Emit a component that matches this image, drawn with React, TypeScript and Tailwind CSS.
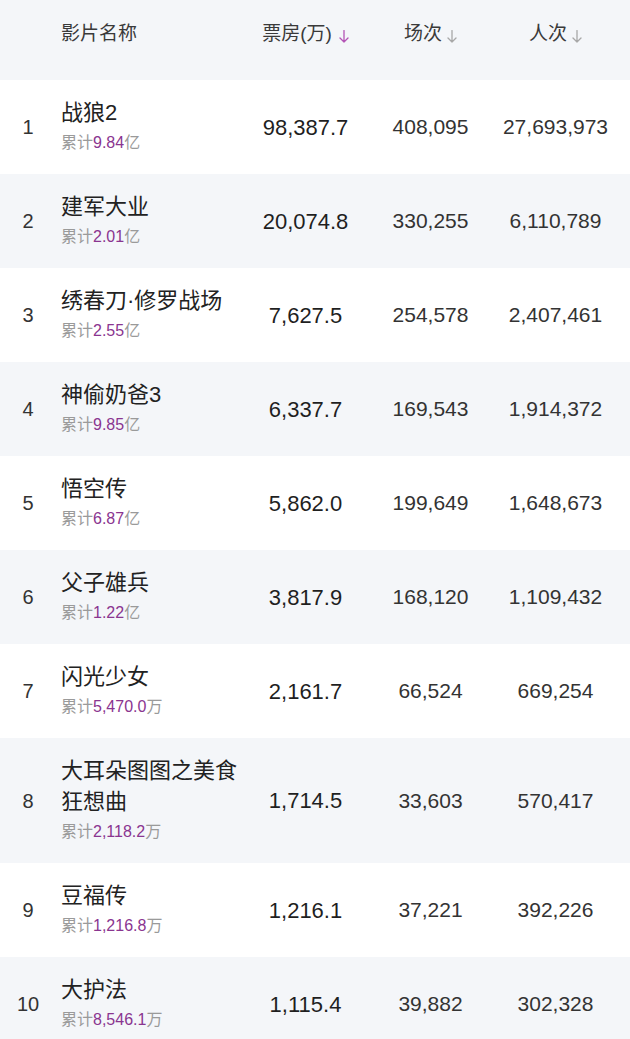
const movies = [
  { rank: 1, name: "战狼2", total: "9.84", unit: "亿", box: "98,387.7", shows: "408,095", people: "27,693,973" },
  { rank: 2, name: "建军大业", total: "2.01", unit: "亿", box: "20,074.8", shows: "330,255", people: "6,110,789" },
  { rank: 3, name: "绣春刀·修罗战场", total: "2.55", unit: "亿", box: "7,627.5", shows: "254,578", people: "2,407,461" },
  { rank: 4, name: "神偷奶爸3", total: "9.85", unit: "亿", box: "6,337.7", shows: "169,543", people: "1,914,372" },
  { rank: 5, name: "悟空传", total: "6.87", unit: "亿", box: "5,862.0", shows: "199,649", people: "1,648,673" },
  { rank: 6, name: "父子雄兵", total: "1.22", unit: "亿", box: "3,817.9", shows: "168,120", people: "1,109,432" },
  { rank: 7, name: "闪光少女", total: "5,470.0", unit: "万", box: "2,161.7", shows: "66,524", people: "669,254" },
  { rank: 8, name: "大耳朵图图之美食狂想曲", total: "2,118.2", unit: "万", box: "1,714.5", shows: "33,603", people: "570,417" },
  { rank: 9, name: "豆福传", total: "1,216.8", unit: "万", box: "1,216.1", shows: "37,221", people: "392,226" },
  { rank: 10, name: "大护法", total: "8,546.1", unit: "万", box: "1,115.4", shows: "39,882", people: "302,328" },
];

function SortArrow({ color, className }: { color: string; className?: string }) {
  return (
    <svg width="10" height="13" viewBox="0 0 10 13" className={`inline-block align-[-3px] ${className ?? ""}`}>
      <path d="M5 0.5V12M1 8l4 4 4-4" fill="none" stroke={color} strokeWidth="1.3" strokeLinecap="round" strokeLinejoin="round" />
    </svg>
  );
}

export default function App() {
  return (
    <div className="w-[630px] min-h-[1039px] bg-[#f4f6f9] font-['Liberation_Sans','Noto_Sans_CJK_SC',sans-serif] overflow-hidden">
      {/* Header */}
      <div className="flex h-[80px] pt-[21px] pr-[12px] text-[19px] leading-[26px] text-[#3a3a3a]">
        <div className="w-[56px] shrink-0" />
        <div className="ml-[5px] w-[182px] shrink-0">影片名称</div>
        <div className="w-[125px] shrink-0 text-center">
          票房(万)
          <SortArrow color="#b455b6" className="ml-[7px]" />
        </div>
        <div className="w-[125px] shrink-0 text-center">
          场次
          <SortArrow color="#a8a8a8" className="ml-[5px]" />
        </div>
        <div className="w-[125px] shrink-0 text-center">
          人次
          <SortArrow color="#a8a8a8" className="ml-[5px]" />
        </div>
      </div>

      {/* Rows */}
      {movies.map((m, idx) => (
        <div
          key={m.rank}
          className={`flex items-center py-[17px] pr-[12px] ${idx % 2 === 0 ? "bg-white" : "bg-[#f4f6f9]"}`}
        >
          <div className="w-[56px] shrink-0 text-center text-[20px] text-[#333333]">{m.rank}</div>
          <div className="ml-[5px] w-[182px] shrink-0">
            <div className="text-[22px] leading-[31px] text-[#222222]">{m.name}</div>
            <div className="text-[16px] leading-[29px] text-[#9a9a9a]">
              累计<span className="text-[#8a3590]">{m.total}</span>
              {m.unit}
            </div>
          </div>
          <div className="w-[125px] shrink-0 text-center text-[22px] text-[#1f1f1f]">{m.box}</div>
          <div className="w-[125px] shrink-0 text-center text-[21px] text-[#333333]">{m.shows}</div>
          <div className="w-[125px] shrink-0 text-center text-[21px] text-[#333333]">{m.people}</div>
        </div>
      ))}
    </div>
  );
}
